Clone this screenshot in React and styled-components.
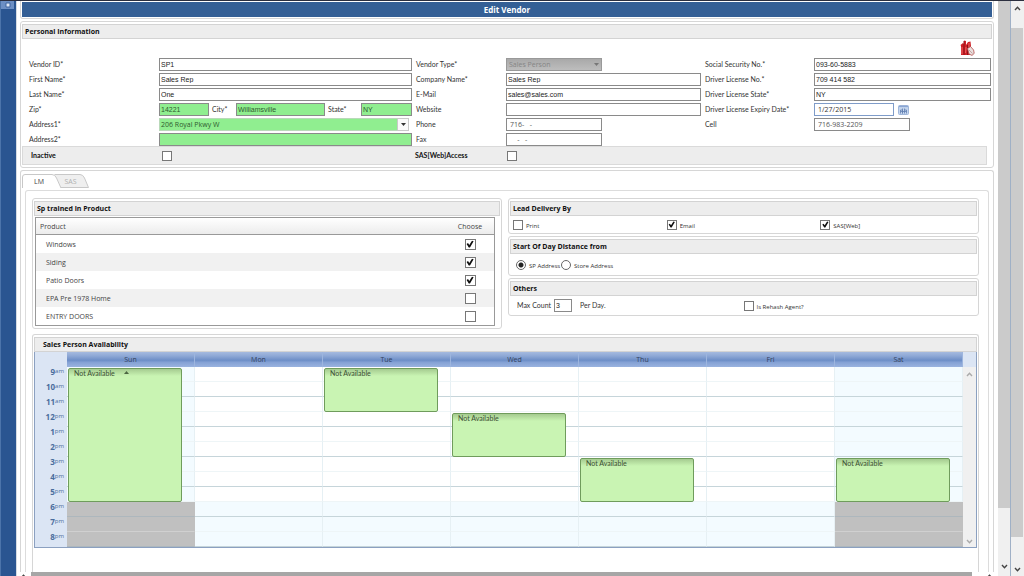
import React from 'react'
import styled, { createGlobalStyle, css } from 'styled-components';

const GlobalStyle = createGlobalStyle`
* { box-sizing: border-box; }
body {
  margin: 0;
  background: #fff;
  color: #333;
  font: 7px/9px "Open Sans", "Noto Sans", sans-serif;
  overflow: hidden;
}
input, select, button {
  font: inherit;
  color: inherit;
  margin: 0;
  border-radius: 0;
}
`;

const narrow = 'Lato, "Open Sans", sans-serif';

const Shell = styled.div`
  display: flex;
  height: 100vh;
  border-top: 1px solid #2b2f3f;
`;

const SideBar = styled.aside`
  width: 16px;
  flex: none;
  background: #2a5591;
  border-left: 1px solid #4c74aa;
`;

const SideToggle = styled.button`
  display: flex;
  align-items: center;
  justify-content: center;
  width: 13px;
  height: 8px;
  padding: 0;
  border: 0;
  background: #6c8fc4;
`;

const Page = styled.main`
  flex: 1;
  min-width: 0;
  display: flex;
  flex-direction: column;
  padding: 0 4px 0 3px;
  border-left: 1px solid #d5dbe2;
`;

const Content = styled.div`
  flex: 1;
  min-height: 0;
  display: flex;
  flex-direction: column;
  gap: 2px;
  overflow: hidden;
`;

const Panel = styled.section`
  padding: 2px 1px ${props => props.$bottom || '2px'};
  border: 1px solid #d6d6d6;
  border-radius: 3px;
  background: #fff;
  ${props => props.$fill && css`
    flex: 1;
    display: flex;
    flex-direction: column;
    min-height: 0;
    padding-bottom: 0;
    border-bottom: 0;
    border-radius: 3px 3px 0 0;
    overflow: hidden;
  `}
`;

const TitlePanel = styled.header`
  padding: 1px 1px 1px;
  border: 1px solid #d6d6d6;
  border-top: 0;
  border-radius: 0 0 3px 3px;
`;

const Title = styled.h1`
  margin: 0;
  padding-top: 1px;
  background: #345f95;
  color: #fff;
  font-size: 8px;
  line-height: 14px;
  text-align: center;
`;

const PanelTitle = styled.h2`
  flex: none;
  margin: 0;
  padding: 0 ${props => props.$indent || '2px'};
  border: 1px solid #d3d3d3;
  background: #ededed;
  color: #111;
  font-size: 7px;
  line-height: 13px;
`;

const IconRow = styled.div`
  display: flex;
  justify-content: flex-end;
  height: 19px;
  padding: 1px 17px 0 0;
`;

const Form = styled.form`
  display: grid;
  grid-template-columns: 383fr 285fr 286fr;
  gap: 4px;
  padding: 0 1px 0 7px;
  font-family: ${narrow};
`;

const Fields = styled.div`
  display: flex;
  flex-direction: column;
  gap: 2px;
`;

const Field = styled.div`
  display: grid;
  grid-template-columns: ${props => props.$label} minmax(0, 1fr);
  align-items: center;
  height: 13px;
`;

const Inline = styled.div`
  display: grid;
  grid-template-columns: 50fr 27px 89fr 36px 51fr;
  align-items: center;
`;

const InlineLabel = styled.label`
  padding-left: 3px;
`;

const TextBox = styled.input`
  width: ${props => props.$width || '100%'};
  min-width: 0;
  height: 13px;
  padding: 0 1px;
  border: 1px solid #8a8a8a;
  background: ${props => (props.$green ? '#90ee90' : '#fff')};
  color: ${props => (props.$green ? '#2f5a2f' : '#222')};
  font-family: "Liberation Sans", Arial, sans-serif;
  font-size: 7px;
  ${props => props.$masked && css`
    padding: 0 3px;
    color: #555;
    font-family: "Open Sans", sans-serif;
    white-space: pre;
  `}
`;

const Combo = styled.div`
  display: flex;
  height: 13px;
  padding-right: 3px;
`;

const ComboInput = styled(TextBox)`
  flex: 1;
  border-color: #b9d9b9;
  border-right: 0;
  font-family: "Open Sans", sans-serif;
`;

const ComboButton = styled.button`
  display: flex;
  align-items: center;
  justify-content: center;
  width: 12px;
  height: 13px;
  padding: 0;
  border: 1px solid #c9c9c9;
  background: #fafafa;
`;

const TypeSelect = styled.select`
  appearance: none;
  width: 96px;
  height: 13px;
  padding: 0 2px;
  border: 1px solid #999;
  background: linear-gradient(#a9a9a9, #bdbdbd);
  color: #858585;
  font-family: "Open Sans", sans-serif;
  opacity: 1;
`;

const SelectWrap = styled.div`
  display: grid;
  grid-template-columns: 96px;
  align-items: center;
  > * { grid-area: 1 / 1; }
  > svg { justify-self: end; margin-right: 3px; }
`;

const DateBox = styled.div`
  display: flex;
  align-items: center;
  gap: 4px;
  input { border-color: #7f9cc9; color: #333; }
`;

const IconButton = styled.button`
  display: flex;
  padding: 0;
  border: 0;
  background: none;
`;

const StatusBar = styled.div`
  display: grid;
  grid-template-columns: 131fr 253fr 92fr 479fr;
  align-items: center;
  height: 19px;
  margin-right: 5px;
  padding-left: 8px;
  border: 1px solid #dadada;
  background: #ededed;
  color: #111;
  font-family: ${narrow};
  font-weight: bold;
`;

const Check = styled.input`
  appearance: none;
  flex: none;
  display: block;
  width: ${props => (props.$small ? '10px' : '11px')};
  height: ${props => (props.$small ? '10px' : '11px')};
  border: 1px solid #777;
  background: #fff;
  &:checked::after {
    content: "";
    display: block;
    height: 100%;
    background: #111;
    clip-path: polygon(12% 50%, 28% 40%, 42% 60%, 72% 14%, 90% 20%, 50% 88%, 36% 88%);
  }
`;

const Radio = styled.input`
  appearance: none;
  flex: none;
  width: 10px;
  height: 10px;
  && { border-radius: 50%; }
  border: 1px solid #666;
  background: ${props => (props.defaultChecked ? 'radial-gradient(circle, #222 0 2px, #fff 3px)' : '#fff')};
`;

const Tabs = styled.nav`
  display: flex;
  flex: none;
  height: 15px;
  padding-top: 1px;
`;

const Tab = styled.button`
  display: grid;
  align-items: center;
  width: ${props => props.$width};
  height: 14px;
  margin-left: ${props => props.$overlap || '0'};
  padding: 0;
  border: 0;
  background: none;
  color: ${props => (props.$active ? '#444' : '#b0b0b0')};
  z-index: ${props => (props.$active ? 1 : 0)};
  > * { grid-area: 1 / 1; }
  span { padding-right: ${props => (props.$active ? '6px' : '2px')}; }
`;

const TabBody = styled.div`
  flex: 1;
  display: flex;
  flex-direction: column;
  gap: 5px;
  min-height: 0;
  margin: 2px 3px 0;
  padding: 7px 9px 0 6px;
  border: 1px solid #dcdcdc;
  border-bottom: 0;
  border-radius: 3px 3px 0 0;
`;

const Columns = styled.div`
  display: grid;
  grid-template-columns: 470fr 471fr;
  align-items: start;
  gap: 6px;
`;

const Stack = styled.div`
  display: flex;
  flex-direction: column;
  gap: 2px;
`;

const Products = styled.table`
  width: calc(100% - 6px);
  margin: 1px 0 0 1px;
  border: 1px solid #999;
  border-collapse: separate;
  border-spacing: 0;
  color: #444;
  font-size: 7px;
  td, th { height: 18px; padding: 0 0 0 10px; text-align: left; }
  th {
    height: 17px;
    padding: 0 0 0 4px;
    border-bottom: 1px solid #999;
    background: linear-gradient(#fff, #ececec);
    font-weight: normal;
  }
  td:last-child, th:last-child { width: 48px; padding: 0; text-align: center; }
  tbody tr:nth-child(even) { background: #f1f1f1; }
  td ${Check} { margin: 0 auto; }
`;

const Options = styled.div`
  display: grid;
  grid-template-columns: ${props => props.$columns};
  align-items: center;
  height: ${props => props.$height};
  padding: 0 ${props => props.$indent || '3px'};
`;

const Option = styled.label`
  display: flex;
  align-items: flex-end;
  gap: 3px;
  color: #333;
  font-size: 6px;
  line-height: 7px;
`;

const CountOption = styled(Option)`
  align-items: center;
  font-family: ${narrow};
  font-size: 7px;
  input { margin-right: 5px; }
`;

const Scheduler = styled.div`
  display: grid;
  grid-template-columns: 32px minmax(0, 1fr) 13px;
  border: 1px solid #8ba0c0;
  border-top: 0;
`;

const Corner = styled.div`
  height: 15px;
  background: #dbe5f4;
`;

const DayHeads = styled.div`
  display: grid;
  grid-template-columns: repeat(7, 1fr);
  background: linear-gradient(#a5badf 0, #8fa9d6 25%, #6d8ec7 55%, #85a2d5 70%, #9ab3df);
`;

const DayHead = styled.div`
  border-right: 1px solid #9db5de;
  color: #33415c;
  line-height: 15px;
  text-align: center;
`;

const Hours = styled.div`
  background: #dbe5f4;
`;

const Hour = styled.div`
  height: 15px;
  padding-right: 3px;
  color: #4a6d9d;
  font-size: 8px;
  font-weight: bold;
  line-height: 9px;
  text-align: right;
  small { font-size: 6px; font-weight: normal; vertical-align: 2px; line-height: 1px; }
`;

const Days = styled.div`
  display: grid;
  grid-template-columns: repeat(7, 1fr);
`;

const Day = styled.div`
  display: grid;
  grid-template-rows: repeat(12, 15px);
`;

const slotColour = ({ $closed, $tint }) => ($closed ? '#c0c0c0' : $tint ? '#f3fbff' : '#fff');

const Slot = styled.div`
  grid-column: 1;
  grid-row: ${props => props.$row};
  border-right: 1px solid ${props => (props.$closed ? '#c0c0c0' : '#e6f0f4')};
  border-bottom: 1px solid ${props => (props.$row % 2 ? (props.$closed ? '#d0d0d0' : '#eef5f7') : (props.$closed ? '#adb7bd' : '#c6d5da'))};
  background: ${slotColour};
`;

const Appointment = styled.div`
  grid-column: 1;
  grid-row: ${props => props.$from} / ${props => props.$to};
  z-index: 1;
  margin: 1px 13px 0 1px;
  padding: 0 5px;
  border: 1px solid #6f9c5c;
  border-radius: 2px;
  background: linear-gradient(#a5cb90, #c9f4b3 7px);
  color: #3a4f32;
  font-family: ${narrow};
  svg { margin: 0 0 2px 9px; }
`;

const GridScroll = styled.div`
  display: flex;
  flex-direction: column;
  justify-content: space-between;
  align-items: center;
  padding: 5px 0 3px;
  background: #f0f0f0;
`;

const BottomScroll = styled.div`
  flex: none;
  display: flex;
  gap: 4px;
  height: 4px;
  padding: 0 1px 0 0;
  overflow: hidden;
  svg { flex: none; margin-top: 2px; }
`;

const BottomThumb = styled.div`
  flex: 1;
  margin-right: 10px;
  background: #a6a6a6;
`;

const ScrollBar = styled.div`
  display: flex;
  flex-direction: column;
  align-items: center;
  flex: none;
  width: 13px;
  border-right: 1px solid ${props => props.$edge || '#f0f0f0'};
  background: #f0f0f0;
  color: #444;
`;

const Thumb = styled.div`
  align-self: stretch;
  flex: 1;
  background: #cbcbcb;
`;

const ScrollEnd = styled.div`
  display: flex;
  align-items: center;
  justify-content: center;
  height: ${props => props.$height};
  padding: ${props => props.$inset || '0'};
`;

const Arrow = ({ up, color = '#444' }) => (
  <svg width="7" height="5" viewBox="0 0 7 5">
    <path d={up ? 'M1 4 L3.5 1.2 L6 4' : 'M1 1 L3.5 3.8 L6 1'} fill="none" stroke={color} strokeWidth="1.4" />
  </svg>
)

const Caret = ({ up, color }) => (
  <svg width="5" height="3" viewBox="0 0 5 3"><path d={up ? 'M0 3H5L2.5 0Z' : 'M0 0H5L2.5 3Z'} fill={color} /></svg>
)

const CalendarIcon = () => (
  <svg width="11" height="10" viewBox="0 0 11 10">
    <rect x="0.5" y="0.5" width="10" height="9" rx="1" fill="#c5d6ee" stroke="#9fb6da" />
    <path d="M1 1.5H10" stroke="#8ba6d4" strokeWidth="1.2" />
    <path d="M2.5 8.5V5H4.5V8.5M4.5 3.5V8.5M6.5 8.5V3.5M6.5 5H8.5V8.5M2.5 6.5H8.5" fill="none" stroke="#5f7eb0" strokeWidth="0.8" />
  </svg>
)

const VendorIcon = () => (
  <svg width="15" height="16" viewBox="0 0 15 16">
    <path d="M1 15V6L0.5 5L3 3L4 4V0.5L6 1V5L8 2L10.5 1.5L11 6L10 15Z" fill="#cf2127" />
    <path d="M4 1V15M7.5 5V15" stroke="#8d1218" strokeWidth="1" />
    <path d="M2 7V14M6 7L5.5 13M9 3V7" stroke="#f0696b" strokeWidth="0.9" />
    <path d="M7.5 8.5L10.5 6.5L13.6 10L14.2 13.4L12 15.4L9 14Z" fill="#e9dfdd" stroke="#b24c4c" strokeWidth="0.8" />
    <path d="M9 10L12.5 13.5" stroke="#b78a88" strokeWidth="0.7" />
  </svg>
)

const TextField = ({ id, label, value, labelWidth, ...rest }) => (
  <Field $label={labelWidth}>
    <label htmlFor={id}>{label}</label>
    <TextBox id={id} defaultValue={value} {...rest} />
  </Field>
)

const products = [
  { name: 'Windows', chosen: true },
  { name: 'Siding', chosen: true },
  { name: 'Patio Doors', chosen: true },
  { name: 'EPA Pre 1978 Home', chosen: false },
  { name: 'ENTRY DOORS', chosen: false },
];

const hours = ['9am', '10am', '11am', '12pm', '1pm', '2pm', '3pm', '4pm', '5pm', '6pm', '7pm', '8pm'];

// from/to are grid lines, line 1 is 9am
const days = [
  { name: 'Sun', weekend: true, from: 1, to: 10, marker: true },
  { name: 'Mon' },
  { name: 'Tue', from: 1, to: 4 },
  { name: 'Wed', from: 4, to: 7 },
  { name: 'Thu', from: 7, to: 10 },
  { name: 'Fri' },
  { name: 'Sat', weekend: true, from: 7, to: 10 },
];

const PersonalInformation = () => (
  <Panel>
    <PanelTitle>Personal Information</PanelTitle>
    <IconRow><VendorIcon /></IconRow>
    <Form>
      <Fields>
        <TextField id="vendorId" label="Vendor ID*" value="SP1" labelWidth="130px" />
        <TextField id="firstName" label="First Name*" value="Sales Rep" labelWidth="130px" />
        <TextField id="lastName" label="Last Name*" value="One" labelWidth="130px" />
        <Field $label="130px">
          <label htmlFor="zip">Zip*</label>
          <Inline>
            <TextBox id="zip" defaultValue="14221" $green />
            <InlineLabel htmlFor="city">City*</InlineLabel>
            <TextBox id="city" defaultValue="Williamsville" $green />
            <InlineLabel htmlFor="state">State*</InlineLabel>
            <TextBox id="state" defaultValue="NY" $green />
          </Inline>
        </Field>
        <Field $label="130px">
          <label htmlFor="address1">Address1*</label>
          <Combo>
            <ComboInput id="address1" defaultValue="206 Royal Pkwy W" $green />
            <ComboButton type="button" aria-label="Show addresses"><Caret color="#333" /></ComboButton>
          </Combo>
        </Field>
        <TextField id="address2" label="Address2*" value="" labelWidth="130px" $green />
      </Fields>
      <Fields>
        <Field $label="90px">
          <label htmlFor="vendorType">Vendor Type*</label>
          <SelectWrap>
            <TypeSelect id="vendorType" disabled><option>Sales Person</option></TypeSelect>
            <Caret color="#777" />
          </SelectWrap>
        </Field>
        <TextField id="company" label="Company Name*" value="Sales Rep" labelWidth="90px" />
        <TextField id="email" label="E-Mail" value="sales@sales.com" labelWidth="90px" />
        <TextField id="website" label="Website" value="" labelWidth="90px" />
        <TextField id="phone" label="Phone" value="716-   -" labelWidth="90px" $width="96px" $masked />
        <TextField id="fax" label="Fax" value="    -   -" labelWidth="90px" $width="96px" $masked />
      </Fields>
      <Fields>
        <TextField id="ssn" label="Social Security No.*" value="093-60-5883" labelWidth="109px" />
        <TextField id="license" label="Driver License No.*" value="709 414 582" labelWidth="109px" />
        <TextField id="licenseState" label="Driver License State*" value="NY" labelWidth="109px" />
        <Field $label="109px">
          <label htmlFor="expiry">Driver License Expiry Date*</label>
          <DateBox>
            <TextBox id="expiry" defaultValue="1/27/2015" $width="80px" $masked />
            <IconButton type="button" aria-label="Open calendar"><CalendarIcon /></IconButton>
          </DateBox>
        </Field>
        <TextField id="cell" label="Cell" value="716-983-2209" labelWidth="109px" $width="96px" $masked />
      </Fields>
    </Form>
    <StatusBar>
      <label htmlFor="inactive">Inactive</label>
      <Check id="inactive" type="checkbox" $small />
      <label htmlFor="access">SAS[Web]Access</label>
      <Check id="access" type="checkbox" $small />
    </StatusBar>
  </Panel>
)

const ProductPanel = () => (
  <Panel>
    <PanelTitle>Sp trained in Product</PanelTitle>
    <Products>
      <thead>
        <tr><th>Product</th><th>Choose</th></tr>
      </thead>
      <tbody>
        {products.map(product => (
          <tr key={product.name}>
            <td>{product.name}</td>
            <td><Check type="checkbox" aria-label={product.name} defaultChecked={product.chosen} /></td>
          </tr>
        ))}
      </tbody>
    </Products>
  </Panel>
)

const DeliveryPanels = () => (
  <Stack>
    <Panel $bottom="0">
      <PanelTitle>Lead Delivery By</PanelTitle>
      <Options $columns="1fr 1fr 1fr" $height="17px">
        <Option><Check type="checkbox" $small />Print</Option>
        <Option><Check type="checkbox" $small defaultChecked />Email</Option>
        <Option><Check type="checkbox" $small defaultChecked />SAS[Web]</Option>
      </Options>
    </Panel>
    <Panel $bottom="0">
      <PanelTitle>Start Of Day Distance from</PanelTitle>
      <Options $columns="45px 1fr" $height="21px" $indent="6px">
        <Option><Radio type="radio" name="start" defaultChecked />SP Address</Option>
        <Option><Radio type="radio" name="start" />Store Address</Option>
      </Options>
    </Panel>
    <Panel $bottom="0">
      <PanelTitle>Others</PanelTitle>
      <Options $columns="1fr 1fr" $height="19px" $indent="7px">
        <CountOption>Max Count<TextBox $width="18px" defaultValue="3" />Per Day.</CountOption>
        <Option><Check type="checkbox" $small />Is Rehash Agent?</Option>
      </Options>
    </Panel>
  </Stack>
)

const Availability = () => (
  <Scheduler>
    <Corner />
    <DayHeads>
      {days.map(day => <DayHead key={day.name}>{day.name}</DayHead>)}
    </DayHeads>
    <Corner />
    <Hours>
      {hours.map(hour => (
        <Hour key={hour}>{hour.slice(0, -2)}<small>{hour.slice(-2)}</small></Hour>
      ))}
    </Hours>
    <Days>
      {days.map(day => (
        <Day key={day.name}>
          {hours.map((hour, index) => (
            <Slot
              key={hour}
              $row={index + 1}
              $tint={day.weekend || index > 8}
              $closed={day.weekend && index > 8}
            />
          ))}
          {day.from && (
            <Appointment $from={day.from} $to={day.to}>
              Not Available{day.marker && <Caret up color="#4c6642" />}
            </Appointment>
          )}
        </Day>
      ))}
    </Days>
    <GridScroll><Arrow up color="#aaa" /><Arrow color="#aaa" /></GridScroll>
  </Scheduler>
)

const App = () => (
  <>
    <GlobalStyle />
    <Shell>
      <SideBar>
        <SideToggle aria-label="Toggle menu">
          <svg width="6" height="6" viewBox="0 0 6 6"><path d="M1 1H5V5H1Z" fill="#dfe9f7" stroke="#3f659f" /></svg>
        </SideToggle>
      </SideBar>
      <Page>
        <Content>
          <TitlePanel><Title>Edit Vendor</Title></TitlePanel>
          <PersonalInformation />
          <Panel $fill>
            <Tabs>
              <Tab $active $width="40px">
                <svg width="40" height="14" viewBox="0 0 40 14">
                  <path d="M0.5 14V3Q0.5 0.5 3 0.5H30Q33 0.5 34.5 4L39 14" fill="#fff" stroke="#c8c8c8" />
                </svg>
                <span>LM</span>
              </Tab>
              <Tab $width="35px" $overlap="-8px">
                <svg width="35" height="14" viewBox="0 0 35 14">
                  <path d="M0.5 0.5H26Q29 0.5 30.5 4L34.5 13.5H6" fill="#efefef" stroke="#c8c8c8" />
                </svg>
                <span>SAS</span>
              </Tab>
            </Tabs>
            <TabBody>
              <Columns>
                <ProductPanel />
                <DeliveryPanels />
              </Columns>
              <Panel $fill>
                <PanelTitle $indent="8px">Sales Person Availability</PanelTitle>
                <Availability />
              </Panel>
            </TabBody>
          </Panel>
        </Content>
        <BottomScroll>
          <Arrow up />
          <BottomThumb />
          <Arrow up />
        </BottomScroll>
      </Page>
      <ScrollBar $edge="#9fb0c6">
        <Thumb />
        <ScrollEnd $height="68px" $inset="48px 0 0"><Arrow /></ScrollEnd>
      </ScrollBar>
      <ScrollBar>
        <ScrollEnd $height="27px" $inset="0 0 13px"><Arrow up /></ScrollEnd>
        <Thumb />
        <ScrollEnd $height="39px" $inset="26px 0 0"><Arrow /></ScrollEnd>
      </ScrollBar>
    </Shell>
  </>
)

export default App
